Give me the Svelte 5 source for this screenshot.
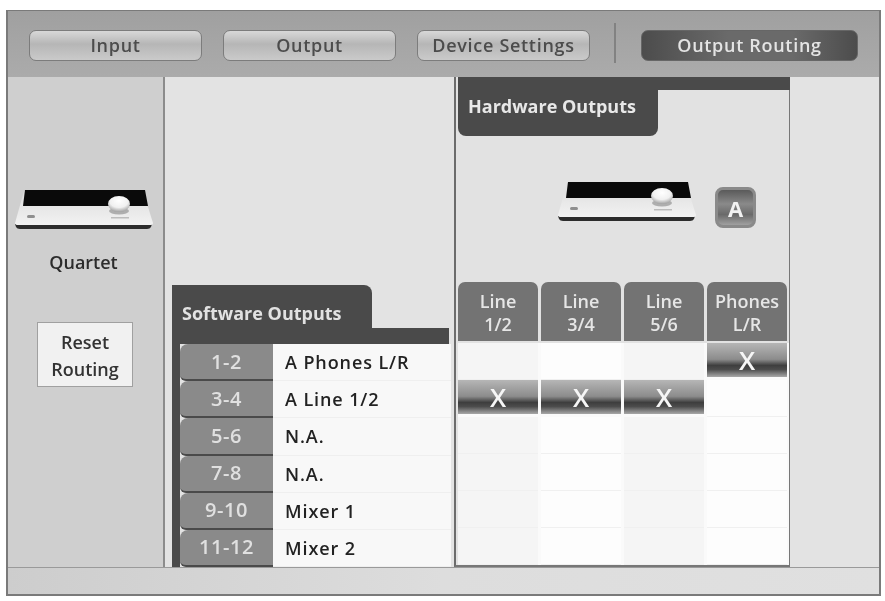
<script>
  const tabs = ['Input', 'Output', 'Device Settings'];
  const sw = [
    ['1-2', 'A Phones L/R'],
    ['3-4', 'A Line 1/2'],
    ['5-6', 'N.A.'],
    ['7-8', 'N.A.'],
    ['9-10', 'Mixer 1'],
    ['11-12', 'Mixer 2']
  ];
  const heads = [['Line', '1/2'], ['Line', '3/4'], ['Line', '5/6'], ['Phones', 'L/R']];
  const matrix = [
    [0, 0, 0, 1],
    [1, 1, 1, 0],
    [0, 0, 0, 0],
    [0, 0, 0, 0],
    [0, 0, 0, 0],
    [0, 0, 0, 0]
  ];
</script>

{#snippet device()}
  <svg class="device" viewBox="0 0 138 40" aria-hidden="true">
    <defs>
      <linearGradient id="body" x1="0" y1="0" x2="0" y2="1">
        <stop offset="0" stop-color="#dcdcdc" />
        <stop offset="1" stop-color="#f2f2f2" />
      </linearGradient>
      <radialGradient id="knob" cx="0.5" cy="0.3" r="0.7">
        <stop offset="0" stop-color="#ffffff" />
        <stop offset="0.6" stop-color="#f0f0f0" />
        <stop offset="1" stop-color="#a0a0a0" />
      </radialGradient>
    </defs>
    <path d="M0 35 L137 35 L136 38 Q135 40 132 40 L5 40 Q2 40 1 38 Z" fill="#2c2c2c" />
    <path d="M9 2 L128 2 L138 34 Q138 36 135 36 L3 36 Q0 36 0 34 Z" fill="url(#body)" />
    <path d="M10 1 L130 1 L133 17 L8 17 Z" fill="#0a0a0a" />
    <ellipse cx="104" cy="22" rx="10" ry="3.5" fill="#9a9a9a" opacity="0.75" />
    <ellipse cx="104" cy="15" rx="11" ry="8" fill="url(#knob)" />
    <rect x="12" y="26" width="8" height="3" rx="1.5" fill="#8f8f8f" />
    <rect x="96" y="28" width="18" height="1.5" fill="#bcbcbc" />
  </svg>
{/snippet}

<div class="window">
  <header class="toolbar">
    {#each tabs as t}
      <button class="pill">{t}</button>
    {/each}
    <span class="sep"></span>
    <button class="pill active">Output Routing</button>
  </header>

  <div class="body">
    <aside class="side">
      <div class="side-device">{@render device()}</div>
      <div class="name">Quartet</div>
      <button class="reset">Reset<br />Routing</button>
    </aside>

    <section class="software">
      <div class="sw-tab">Software Outputs</div>
      <div class="sw-bar"></div>
      <div class="sw-rows">
        {#each sw as [n, label]}
          <div class="sw-row">
            <span class="num">{n}</span>
            <span class="lab">{label}</span>
          </div>
        {/each}
      </div>
    </section>

    <section class="hardware">
      <div class="hw-bar"></div>
      <div class="hw-tab">Hardware Outputs</div>
      <div class="hw-device">
        {@render device()}
        <span class="badge">A</span>
      </div>
      <div class="heads">
        {#each heads as [a, b]}
          <div class="head">{a}<br />{b}</div>
        {/each}
      </div>
      <div class="matrix">
        {#each matrix as row}
          {#each row as on}
            <div class="cell" class:on>{on ? 'X' : ''}</div>
          {/each}
        {/each}
      </div>
    </section>
  </div>
  <div class="status"></div>
</div>

<style>
  :global(body) {
    margin: 0;
    background: #fff;
  }
  .window {
    box-sizing: border-box;
    width: 875px;
    height: 586px;
    margin: 10px 0 0 6px;
    border: 2px solid #7a7a7a;
    border-top-width: 1px;
    background: #e3e3e3;
    display: flex;
    flex-direction: column;
    font-family: "Open Sans", "DejaVu Sans", sans-serif;
    filter: blur(0.6px);
  }
  .toolbar {
    height: 66px;
    flex: none;
    box-sizing: border-box;
    padding: 19px 0 0 21px;
    display: flex;
    align-items: flex-start;
    background: linear-gradient(#a0a0a0, #ababab);
  }
  .pill {
    width: 173px;
    height: 31px;
    margin-right: 21px;
    padding: 0;
    border: 1px solid #7c7c7c;
    border-radius: 7px;
    background: linear-gradient(#d8d8d8, #b6b6b6 45%, #cacaca);
    color: #4c4c4c;
    font: 600 18px/27px "Open Sans", sans-serif;
    letter-spacing: 0.7px;
  }
  .sep {
    width: 2px;
    height: 40px;
    margin: -7px 25px 0 3px;
    background: #828282;
  }
  .pill.active {
    width: 217px;
    margin: 0;
    border-color: #666;
    background: linear-gradient(90deg, #4c4c4c, #6a6a6a 40%, #6a6a6a 70%, #4c4c4c);
    color: #e4e4e4;
  }
  .body {
    flex: 1;
    min-height: 0;
    display: flex;
  }
  .side {
    width: 157px;
    flex: none;
    box-sizing: border-box;
    border-right: 2px solid #8c8c8c;
    background: #cfcfcf;
    display: flex;
    flex-direction: column;
    align-items: center;
    padding-top: 112px;
  }
  .side-device {
    margin-left: -4px;
  }
  .device {
    width: 138px;
    height: 40px;
    display: block;
  }
  .name {
    margin: 20px 0 0 -4px;
    font-size: 18px;
    font-weight: 600;
    line-height: 27px;
    color: #2c2c2c;
  }
  .reset {
    width: 96px;
    height: 65px;
    margin: 46px 0 0 -1px;
    padding: 3px 0 0;
    border: 1px solid #a0a0a0;
    border-radius: 0;
    background: #f1f1f1;
    color: #333;
    font: 600 18px/27px "Open Sans", sans-serif;
  }
  .software {
    width: 277px;
    margin: 208px 0 0 7px;
    flex: none;
    display: flex;
    flex-direction: column;
    background: linear-gradient(#4a4a4a, #4a4a4a) left / 8px 100% no-repeat;
  }
  .sw-tab {
    width: 200px;
    height: 43px;
    flex: none;
    box-sizing: border-box;
    padding: 17px 0 0 10px;
    border-radius: 0 8px 0 0;
    background: #4a4a4a;
    color: #e2e2e2;
    font-size: 18px;
    font-weight: 700;
    line-height: 22px;
    white-space: nowrap;
  }
  .sw-bar {
    height: 16px;
    flex: none;
    background: #4a4a4a;
  }
  .sw-rows {
    flex: 1;
    display: grid;
    grid-template-rows: repeat(6, 1fr);
    padding-left: 8px;
    margin-right: -2px;
  }
  .sw-row {
    display: flex;
    min-height: 0;
  }
  .num {
    width: 93px;
    flex: none;
    box-sizing: border-box;
    padding-bottom: 1px;
    display: flex;
    align-items: center;
    justify-content: center;
    border-radius: 8px 0 0 6px;
    border-bottom: 2px solid #4a4a4a;
    background: #8a8a8a;
    color: #e0e0e0;
    font-size: 20px;
    font-weight: 600;
    letter-spacing: 0.6px;
  }
  .lab {
    flex: 1;
    display: flex;
    align-items: center;
    padding-left: 12px;
    background: #f8f8f8;
    border-bottom: 1px solid #efefef;
    color: #222;
    font-size: 18px;
    font-weight: 600;
    letter-spacing: 0.9px;
  }
  .hardware {
    width: 336px;
    flex: none;
    box-sizing: border-box;
    margin-left: 5px;
    padding: 0 1px 0 2px;
    border-left: 2px solid #6c6c6c;
    border-right: 1px solid #777;
    border-bottom: 2px solid #777;
    display: flex;
    flex-direction: column;
    background: #e2e2e2;
  }
  .hw-bar {
    height: 13px;
    margin: 0 -2px 0 0;
    flex: none;
    background: #4a4a4a;
  }
  .hw-tab {
    width: 200px;
    height: 46px;
    flex: none;
    box-sizing: border-box;
    padding: 3px 0 0 10px;
    border-radius: 0 0 8px 8px;
    background: #4a4a4a;
    color: #e8e8e8;
    font-size: 18px;
    font-weight: 700;
    line-height: 26px;
    white-space: nowrap;
  }
  .hw-device {
    margin: 45px 0 0 100px;
    height: 60px;
    display: flex;
    align-items: flex-start;
    gap: 19px;
  }
  .badge {
    box-sizing: border-box;
    width: 41px;
    height: 41px;
    margin-top: 6px;
    display: flex;
    align-items: center;
    justify-content: center;
    border-radius: 8px;
    border: 3px solid #8a8a8a;
    background: linear-gradient(#5a5a5a, #8a8a8a 40%, #6a6a6a 70%, #a0a0a0);
    color: #f2f2f2;
    font-size: 22px;
    font-weight: 700;
  }
  .heads {
    margin-top: auto;
    display: grid;
    grid-template-columns: repeat(4, 80px);
    column-gap: 3px;
    flex: none;
  }
  .head {
    height: 59px;
    box-sizing: border-box;
    padding-top: 8px;
    border-radius: 7px 7px 0 0;
    background: #737373;
    color: #e6e6e6;
    font-size: 18px;
    font-weight: 600;
    line-height: 23px;
    text-align: center;
  }
  .matrix {
    height: 222px;
    margin: 2px -1px 0 0;
    padding-right: 1px;
    flex: none;
    display: grid;
    grid-template-columns: repeat(4, 80px);
    grid-template-rows: repeat(6, 1fr);
    column-gap: 3px;
    background: #fafafa;
  }
  .cell {
    display: flex;
    align-items: center;
    justify-content: center;
    background: #f5f5f5;
    border-bottom: 1px solid #f0f0f0;
    color: #f6f6f6;
    font-size: 26px;
    font-weight: 600;
    line-height: 1;
  }
  .cell:nth-child(4n + 2),
  .cell:nth-child(4n) {
    background: #fdfdfd;
  }
  .cell.on,
  .cell.on:nth-child(4n + 2),
  .cell.on:nth-child(4n) {
    background: linear-gradient(#b6b6b6, #8c8c8c 48%, #3e3e3e 66%, #4c4c4c 78%, #a8a8a8);
    margin-bottom: 3px;
    border: 0;
  }
  .status {
    height: 26px;
    flex: none;
    background: linear-gradient(90deg, #cdcdcd, #dddddd 50%, #e0e0e0);
    border-top: 1px solid #9a9a9a;
  }
</style>
